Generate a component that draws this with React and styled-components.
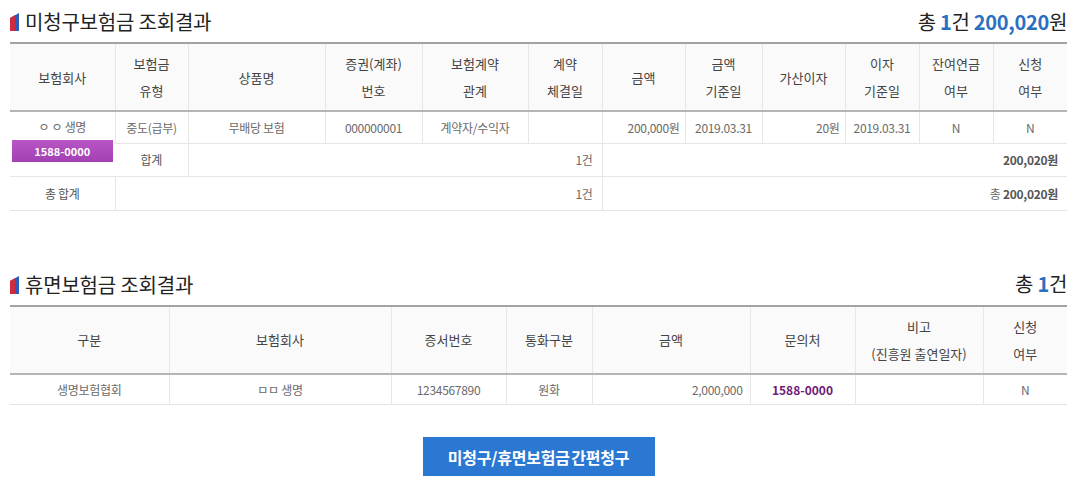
import styled, { createGlobalStyle } from 'styled-components';

const GlobalStyle = createGlobalStyle`
  body {
    margin: 0;
    background: #fff;
    font-family: "Noto Sans CJK KR", "Noto Sans", sans-serif;
    color: #333;
  }
`;

// 컬럼 폭
const unpaidCols = [105, 73, 137, 97, 106, 74, 83, 77, 83, 74, 74, 74];
const dormantCols = [159, 222, 115, 86, 158, 105, 128, 84];

const unpaidHeads = [
  ['보험회사'],
  ['보험금', '유형'],
  ['상품명'],
  ['증권(계좌)', '번호'],
  ['보험계약', '관계'],
  ['계약', '체결일'],
  ['금액'],
  ['금액', '기준일'],
  ['가산이자'],
  ['이자', '기준일'],
  ['잔여연금', '여부'],
  ['신청', '여부']
];

const dormantHeads = [
  ['구분'],
  ['보험회사'],
  ['증서번호'],
  ['통화구분'],
  ['금액'],
  ['문의처'],
  ['비고', '(진흥원 출연일자)'],
  ['신청', '여부']
];

const TitleIcon = () => (
  <svg width="9" height="18" viewBox="0 0 9 18">
    <polygon points="0,5 9,0 9,18 0,18" fill="#2b5cb8" />
    <polygon points="0,5 5,2.2 5,18 0,18" fill="#cf2b3f" />
  </svg>
);

const HeadCells = ({ heads }) =>
  heads.map((lines, i) => (
    <Th key={i}>
      {lines.map((l, j) => (
        <span key={j}>
          {j > 0 && <br />}
          {l}
        </span>
      ))}
    </Th>
  ));

export default function App() {
  return (
    <>
      <GlobalStyle />
      <Page>
        {/* 미청구보험금 */}
        <SectionHead>
          <Title>
            <TitleIcon />
            미청구보험금 조회결과
          </Title>
          <Summary>
            총 <b>1</b>건 <b>200,020</b>원
          </Summary>
        </SectionHead>
        <Table>
          <colgroup>
            {unpaidCols.map((w, i) => (
              <col key={i} style={{ width: w }} />
            ))}
          </colgroup>
          <thead>
            <tr>
              <HeadCells heads={unpaidHeads} />
            </tr>
          </thead>
          <tbody>
            <Tr $h={32}>
              <CompanyCell rowSpan={2}>
                <div>ㅇ ㅇ 생명</div>
                <Badge>1588-0000</Badge>
              </CompanyCell>
              <Td>중도(급부)</Td>
              <Td>무배당 보험</Td>
              <Td>000000001</Td>
              <Td>계약자/수익자</Td>
              <Td />
              <Td $align="right">200,000원</Td>
              <Td>2019.03.31</Td>
              <Td $align="right">20원</Td>
              <Td>2019.03.31</Td>
              <Td>N</Td>
              <Td>N</Td>
            </Tr>
            <Tr $h={33}>
              <Td $dark>합계</Td>
              <Td colSpan={4} $align="right" $pad={9}>
                1건
              </Td>
              <Td colSpan={6} $align="right" $pad={9}>
                <Strong>200,020원</Strong>
              </Td>
            </Tr>
            <Tr $h={34}>
              <Td $dark>총 합계</Td>
              <Td colSpan={5} $align="right" $pad={9}>
                1건
              </Td>
              <Td colSpan={6} $align="right" $pad={9}>
                총 <Strong>200,020원</Strong>
              </Td>
            </Tr>
          </tbody>
        </Table>

        {/* 휴면보험금 */}
        <SectionHead $gap={52}>
          <Title>
            <TitleIcon />
            휴면보험금 조회결과
          </Title>
          <Summary>
            총 <b>1</b>건
          </Summary>
        </SectionHead>
        <Table>
          <colgroup>
            {dormantCols.map((w, i) => (
              <col key={i} style={{ width: w }} />
            ))}
          </colgroup>
          <thead>
            <tr>
              <HeadCells heads={dormantHeads} />
            </tr>
          </thead>
          <tbody>
            <Tr $h={31}>
              <Td>생명보험협회</Td>
              <Td>ㅁㅁ 생명</Td>
              <Td>1234567890</Td>
              <Td>원화</Td>
              <Td $align="right" $pad={7}>
                2,000,000
              </Td>
              <Td>
                <Phone>1588-0000</Phone>
              </Td>
              <Td />
              <Td>N</Td>
            </Tr>
          </tbody>
        </Table>

        <ButtonRow>
          <ClaimButton>미청구/휴면보험금 간편청구</ClaimButton>
        </ButtonRow>
      </Page>
    </>
  );
}

const Page = styled.div`
  width: 1057px;
  padding: 0 14px 0 10px;
`;

const SectionHead = styled.div`
  display: flex;
  align-items: center;
  justify-content: space-between;
  height: 42px;
  margin-top: ${({ $gap }) => $gap || 0}px;
`;

const Title = styled.h2`
  display: flex;
  align-items: center;
  gap: 6px;
  margin: 0;
  padding-top: 1px;
  font-size: 20px;
  font-weight: 400;
  color: #222;
  letter-spacing: -0.2px;

  svg {
    margin-top: 1px;
  }
`;

const Summary = styled.div`
  font-size: 20px;
  font-weight: 400;
  color: #222;
  letter-spacing: -0.3px;

  b {
    color: #2b6fc0;
    font-weight: 700;
  }
`;

const Table = styled.table`
  width: 100%;
  table-layout: fixed;
  border-collapse: collapse;
  border-top: 2px solid #a3a3a3;
  border-bottom: 1px solid #e3e3e3;
`;

const Th = styled.th`
  height: 66px;
  padding: 0 2px;
  background: #fafafa;
  border-bottom: 2px solid #b5b5b5;
  border-left: 1px solid #e6e6e6;
  font-size: 13px;
  font-weight: 400;
  line-height: 27px;
  color: #444;
  text-align: center;
  vertical-align: middle;

  &:first-child {
    border-left: 0;
  }
`;

const Tr = styled.tr`
  height: ${({ $h }) => $h}px;
`;

const Td = styled.td`
  padding: 0 ${({ $pad }) => $pad || 5}px;
  border-top: 1px solid #e6e6e6;
  border-left: 1px solid #e6e6e6;
  font-size: 12px;
  color: ${({ $dark }) => ($dark ? '#555' : '#6a6a6a')};
  text-align: ${({ $align }) => $align || 'center'};
  white-space: nowrap;
  letter-spacing: -0.3px;

  &:first-child {
    border-left: 0;
  }
`;

const CompanyCell = styled(Td)`
  vertical-align: top;
  padding: 6px 2px 0;
  line-height: 18px;
`;

const Badge = styled.div`
  margin-top: 4px;
  height: 22px;
  line-height: 22px;
  background: linear-gradient(180deg, #b956c6 0%, #a23fb2 100%);
  color: #fff;
  font-size: 11px;
  font-weight: 700;
  letter-spacing: 0;
`;

const Strong = styled.span`
  font-weight: 700;
  color: #555;
`;

const Phone = styled.span`
  font-weight: 700;
  color: #6e1a78;
  letter-spacing: 0;
`;

const ButtonRow = styled.div`
  display: flex;
  justify-content: center;
  margin-top: 32px;
`;

const ClaimButton = styled.button`
  width: 232px;
  height: 39px;
  border: 0;
  background: #2a78d2;
  color: #fff;
  font-family: inherit;
  font-size: 16px;
  font-weight: 700;
  letter-spacing: -0.2px;
  word-spacing: -2px;
  cursor: pointer;
`;
